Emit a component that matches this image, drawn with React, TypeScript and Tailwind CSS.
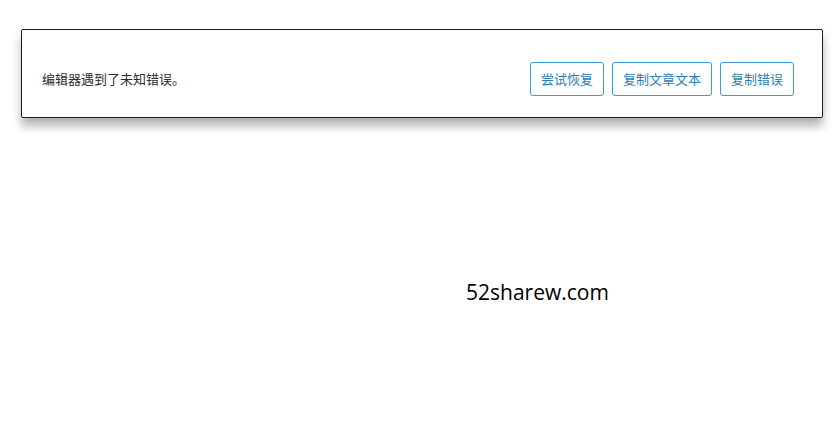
export default function App() {
  const buttons = ['尝试恢复', '复制文章文本', '复制错误'];
  return (
    <div
      className="w-[840px] h-[433px] bg-white overflow-hidden"
      style={{ fontFamily: '"Noto Sans CJK SC", "Noto Sans", sans-serif' }}
    >
      <div className="ml-[21px] mt-[29px] w-[802px] h-[89px] border border-[#1e1e1e] rounded-[2px] bg-white shadow-[0_8px_10px_rgba(0,0,0,0.3)] flex items-center justify-between pl-[20px] pr-[28px] pt-[10px]">
        <p className="text-[13px] text-[#2c2c2c] leading-none">编辑器遇到了未知错误。</p>
        <div className="flex gap-2">
          {buttons.map((b) => (
            <button
              key={b}
              className="h-[34px] px-[10px] border border-[#3a9fd4] rounded-[3px] text-[13px] text-[#2b7fb5] bg-white leading-none"
            >
              {b}
            </button>
          ))}
        </div>
      </div>
      <div className="ml-[466px] mt-[164px] text-[21px] leading-none text-black" style={{ fontFamily: '"Open Sans", "Noto Sans", sans-serif' }}>
        52sharew.com
      </div>
    </div>
  );
}
